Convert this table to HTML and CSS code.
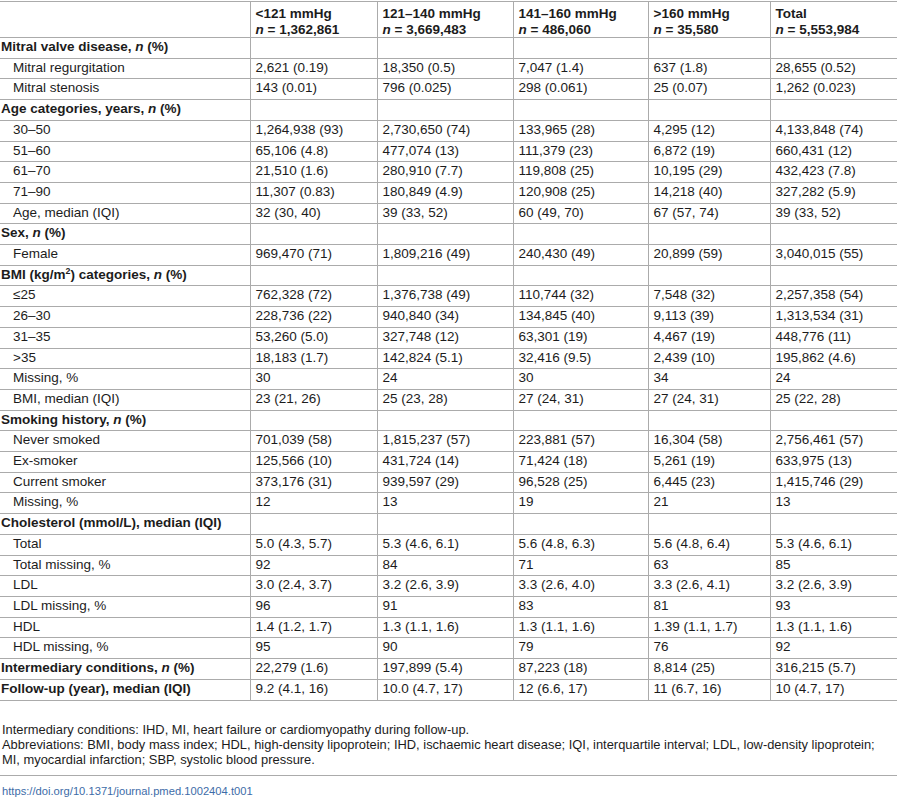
FILE: index.html
```html
<!DOCTYPE html>
<html lang="en">
<head>
    <meta charset="UTF-8">
    <title>Table 1. Baseline characteristics by SBP category</title>
    <link rel="stylesheet" href="styles.css">
</head>
<body>
    <table class="data-table">
        <colgroup>
            <col class="col-label">
            <col class="col-a">
            <col class="col-b">
            <col class="col-c">
            <col class="col-d">
            <col class="col-e">
        </colgroup>
        <thead>
            <tr>
                <th></th>
                <th>&lt;121 mmHg<br><i>n</i> = 1,362,861</th>
                <th>121–140 mmHg<br><i>n</i> = 3,669,483</th>
                <th>141–160 mmHg<br><i>n</i> = 486,060</th>
                <th>&gt;160 mmHg<br><i>n</i> = 35,580</th>
                <th>Total<br><i>n</i> = 5,553,984</th>
            </tr>
        </thead>
        <tbody>
            <tr class="group"><td>Mitral valve disease, <i>n</i> (%)</td><td></td><td></td><td></td><td></td><td></td></tr>
            <tr><td class="sub">Mitral regurgitation</td><td>2,621 (0.19)</td><td>18,350 (0.5)</td><td>7,047 (1.4)</td><td>637 (1.8)</td><td>28,655 (0.52)</td></tr>
            <tr><td class="sub">Mitral stenosis</td><td>143 (0.01)</td><td>796 (0.025)</td><td>298 (0.061)</td><td>25 (0.07)</td><td>1,262 (0.023)</td></tr>

            <tr class="group"><td>Age categories, years, <i>n</i> (%)</td><td></td><td></td><td></td><td></td><td></td></tr>
            <tr><td class="sub">30–50</td><td>1,264,938 (93)</td><td>2,730,650 (74)</td><td>133,965 (28)</td><td>4,295 (12)</td><td>4,133,848 (74)</td></tr>
            <tr><td class="sub">51–60</td><td>65,106 (4.8)</td><td>477,074 (13)</td><td>111,379 (23)</td><td>6,872 (19)</td><td>660,431 (12)</td></tr>
            <tr><td class="sub">61–70</td><td>21,510 (1.6)</td><td>280,910 (7.7)</td><td>119,808 (25)</td><td>10,195 (29)</td><td>432,423 (7.8)</td></tr>
            <tr><td class="sub">71–90</td><td>11,307 (0.83)</td><td>180,849 (4.9)</td><td>120,908 (25)</td><td>14,218 (40)</td><td>327,282 (5.9)</td></tr>
            <tr><td class="sub">Age, median (IQI)</td><td>32 (30, 40)</td><td>39 (33, 52)</td><td>60 (49, 70)</td><td>67 (57, 74)</td><td>39 (33, 52)</td></tr>

            <tr class="group"><td>Sex, <i>n</i> (%)</td><td></td><td></td><td></td><td></td><td></td></tr>
            <tr><td class="sub">Female</td><td>969,470 (71)</td><td>1,809,216 (49)</td><td>240,430 (49)</td><td>20,899 (59)</td><td>3,040,015 (55)</td></tr>

            <tr class="group"><td>BMI (kg/m<sup>2</sup>) categories, <i>n</i> (%)</td><td></td><td></td><td></td><td></td><td></td></tr>
            <tr><td class="sub">≤25</td><td>762,328 (72)</td><td>1,376,738 (49)</td><td>110,744 (32)</td><td>7,548 (32)</td><td>2,257,358 (54)</td></tr>
            <tr><td class="sub">26–30</td><td>228,736 (22)</td><td>940,840 (34)</td><td>134,845 (40)</td><td>9,113 (39)</td><td>1,313,534 (31)</td></tr>
            <tr><td class="sub">31–35</td><td>53,260 (5.0)</td><td>327,748 (12)</td><td>63,301 (19)</td><td>4,467 (19)</td><td>448,776 (11)</td></tr>
            <tr><td class="sub">&gt;35</td><td>18,183 (1.7)</td><td>142,824 (5.1)</td><td>32,416 (9.5)</td><td>2,439 (10)</td><td>195,862 (4.6)</td></tr>
            <tr><td class="sub">Missing, %</td><td>30</td><td>24</td><td>30</td><td>34</td><td>24</td></tr>
            <tr><td class="sub">BMI, median (IQI)</td><td>23 (21, 26)</td><td>25 (23, 28)</td><td>27 (24, 31)</td><td>27 (24, 31)</td><td>25 (22, 28)</td></tr>

            <tr class="group"><td>Smoking history, <i>n</i> (%)</td><td></td><td></td><td></td><td></td><td></td></tr>
            <tr><td class="sub">Never smoked</td><td>701,039 (58)</td><td>1,815,237 (57)</td><td>223,881 (57)</td><td>16,304 (58)</td><td>2,756,461 (57)</td></tr>
            <tr><td class="sub">Ex-smoker</td><td>125,566 (10)</td><td>431,724 (14)</td><td>71,424 (18)</td><td>5,261 (19)</td><td>633,975 (13)</td></tr>
            <tr><td class="sub">Current smoker</td><td>373,176 (31)</td><td>939,597 (29)</td><td>96,528 (25)</td><td>6,445 (23)</td><td>1,415,746 (29)</td></tr>
            <tr><td class="sub">Missing, %</td><td>12</td><td>13</td><td>19</td><td>21</td><td>13</td></tr>

            <tr class="group"><td>Cholesterol (mmol/L), median (IQI)</td><td></td><td></td><td></td><td></td><td></td></tr>
            <tr><td class="sub">Total</td><td>5.0 (4.3, 5.7)</td><td>5.3 (4.6, 6.1)</td><td>5.6 (4.8, 6.3)</td><td>5.6 (4.8, 6.4)</td><td>5.3 (4.6, 6.1)</td></tr>
            <tr><td class="sub">Total missing, %</td><td>92</td><td>84</td><td>71</td><td>63</td><td>85</td></tr>
            <tr><td class="sub">LDL</td><td>3.0 (2.4, 3.7)</td><td>3.2 (2.6, 3.9)</td><td>3.3 (2.6, 4.0)</td><td>3.3 (2.6, 4.1)</td><td>3.2 (2.6, 3.9)</td></tr>
            <tr><td class="sub">LDL missing, %</td><td>96</td><td>91</td><td>83</td><td>81</td><td>93</td></tr>
            <tr><td class="sub">HDL</td><td>1.4 (1.2, 1.7)</td><td>1.3 (1.1, 1.6)</td><td>1.3 (1.1, 1.6)</td><td>1.39 (1.1, 1.7)</td><td>1.3 (1.1, 1.6)</td></tr>
            <tr><td class="sub">HDL missing, %</td><td>95</td><td>90</td><td>79</td><td>76</td><td>92</td></tr>

            <tr class="group"><td>Intermediary conditions, <i>n</i> (%)</td><td>22,279 (1.6)</td><td>197,899 (5.4)</td><td>87,223 (18)</td><td>8,814 (25)</td><td>316,215 (5.7)</td></tr>
            <tr class="group"><td>Follow-up (year), median (IQI)</td><td>9.2 (4.1, 16)</td><td>10.0 (4.7, 17)</td><td>12 (6.6, 17)</td><td>11 (6.7, 16)</td><td>10 (4.7, 17)</td></tr>
        </tbody>
    </table>

    <div class="notes">
        <p>Intermediary conditions: IHD, MI, heart failure or cardiomyopathy during follow-up.</p>
        <p>Abbreviations: BMI, body mass index; HDL, high-density lipoprotein; IHD, ischaemic heart disease; IQI, interquartile interval; LDL, low-density lipoprotein; MI, myocardial infarction; SBP, systolic blood pressure.</p>
    </div>
    <div class="doi">
        <a href="#">https://doi.org/10.1371/journal.pmed.1002404.t001</a>
    </div>
</body>
</html>
```

FILE: styles.css
```css
html, body {
    background: #fff;
}
body {
    margin: 0;
    padding: 0;
    font-family: 'Liberation Sans', Arial, sans-serif;
    font-size: 13.5px;
    color: #1c1c1c;
}
.data-table {
    width: 100%;
    table-layout: fixed;
    border-collapse: collapse;
    margin-top: 1px;
}
.col-label { width: 250px; }
.col-a { width: 127px; }
.col-b { width: 136px; }
.col-c { width: 135px; }
.col-d { width: 122px; }
.col-e { width: 127px; }

.data-table th,
.data-table td {
    text-align: left;
    vertical-align: top;
    white-space: nowrap;
    border-bottom: 1px solid #ababab;
    border-left: 1px solid #ababab;
}
.data-table th:first-child,
.data-table td:first-child {
    border-left: none;
}
.data-table th {
    font-weight: bold;
    line-height: 15.5px;
    padding: 4px 5px 0 5px;
    border-top: 1px solid #ababab;
}
.data-table td {
    line-height: 17.7px;
    padding: 0 5px 2px 5px;
}
.data-table tr.group td:first-child {
    font-weight: bold;
    padding-left: 1px;
}
.data-table td.sub {
    padding-left: 13px;
}
sup {
    font-size: 0.65em;
    line-height: 0;
    vertical-align: 0.55em;
}
.notes {
    margin-top: 21px;
    padding: 0 2px;
    font-size: 12.9px;
    line-height: 15px;
}
.notes p {
    margin: 0;
}
.doi {
    margin-top: 8px;
    border-top: 1px solid #ababab;
    padding: 8px 2px 0 2px;
    font-size: 11.2px;
    line-height: 15px;
}
.doi a {
    color: #3d6ca8;
    text-decoration: none;
}
```
